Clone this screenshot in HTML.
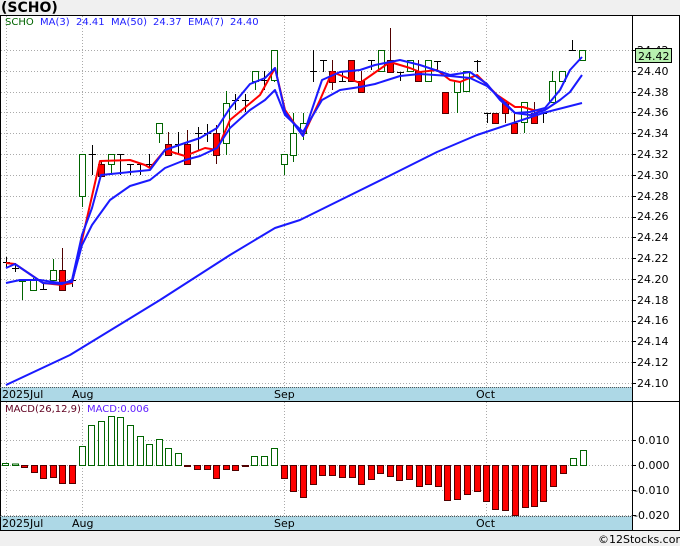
<!DOCTYPE html>
<html><head><meta charset="utf-8"><style>
body{margin:0;background:#f0f0f0;width:680px;height:546px;overflow:hidden;font-family:"Liberation Sans",sans-serif}
svg{position:absolute;left:0;top:0}
</style></head><body>
<svg id="s" width="680" height="546" viewBox="0 0 680 546" font-family="DejaVu Sans, Liberation Sans, sans-serif">
<text x="1" y="12" font-size="14" font-weight="bold" fill="#000">(SCHO)</text>
<rect x="0.5" y="15.5" width="679" height="515" fill="#fff" stroke="#000"/>
<g id="grid" stroke="#aaa" stroke-dasharray="1,2" stroke-width="1"></g>
<rect x="1" y="387" width="631" height="14" fill="#add8e6"/>
<line x1="0" y1="387.5" x2="632" y2="387.5" stroke="#555" stroke-dasharray="1,1"/>
<line x1="0" y1="401.5" x2="680" y2="401.5" stroke="#000"/>
<rect x="1" y="516" width="631" height="14" fill="#add8e6"/>
<line x1="0" y1="516.5" x2="632" y2="516.5" stroke="#555" stroke-dasharray="1,1"/>
<line x1="632.5" y1="15" x2="632.5" y2="530" stroke="#000"/>
<g font-size="11" fill="#000">
<text x="2" y="398">2025Jul</text><text x="72" y="398">Aug</text><text x="274" y="398">Sep</text><text x="476" y="398">Oct</text>
<text x="2" y="527">2025Jul</text><text x="72" y="527">Aug</text><text x="274" y="527">Sep</text><text x="476" y="527">Oct</text>
</g>
<g id="data"></g>
<g font-size="10">
<text x="5" y="25" fill="#006400">SCHO</text>
<text x="40" y="25" fill="#2020ff">MA(3)</text><text x="76" y="25" fill="#2020ff">24.41</text>
<text x="111" y="25" fill="#2020ff">MA(50)</text><text x="153" y="25" fill="#2020ff">24.37</text>
<text x="188" y="25" fill="#2020ff">EMA(7)</text><text x="230" y="25" fill="#2020ff">24.40</text>
<text x="5" y="412" fill="#600020">MACD(26,12,9)</text><text x="87" y="412" fill="#6020ff">MACD:0.006</text>
</g>
<g font-size="11" fill="#000" id="ax">
<text x="637" y="54">24.42</text><text x="637" y="75">24.40</text><text x="637" y="96">24.38</text><text x="637" y="116">24.36</text>
<text x="637" y="137">24.34</text><text x="637" y="158">24.32</text><text x="637" y="179">24.30</text><text x="637" y="200">24.28</text>
<text x="637" y="220">24.26</text><text x="637" y="241">24.24</text><text x="637" y="262">24.22</text><text x="637" y="283">24.20</text>
<text x="637" y="304">24.18</text><text x="637" y="324">24.16</text><text x="637" y="345">24.14</text><text x="637" y="366">24.12</text>
<text x="637" y="387">24.10</text>
<text x="638" y="444">0.010</text><text x="638" y="469">0.000</text><text x="634" y="494">-0.010</text><text x="634" y="519">-0.020</text>
</g>
<rect x="635.5" y="48.5" width="36" height="14" fill="#b8f0b0" stroke="#000"/>
<text x="638" y="60" font-size="11" fill="#000">24.42</text>
<text x="598" y="543" font-size="11" fill="#000">©12Stocks.com</text>
</svg>
<script>
var NS="http://www.w3.org/2000/svg";
function el(p,t,a){var e=document.createElementNS(NS,t);for(var k in a)e.setAttribute(k,a[k]);p.appendChild(e);return e;}
var g=document.getElementById('grid'),d=document.getElementById('data');
function Y(v){return 383-(v-24.10)*1040.6;}
for(var v=24.10;v<24.43;v+=0.02){var y=Math.round(Y(v))+.5;el(g,'line',{x1:1,x2:632,y1:y,y2:y});el(g,'line',{x1:632,x2:636,y1:y,y2:y,stroke:'#000','stroke-dasharray':'none'});}
[440,465,490,515].forEach(function(y){el(g,'line',{x1:1,x2:632,y1:y+.5,y2:y+.5});el(g,'line',{x1:632,x2:636,y1:y+.5,y2:y+.5,stroke:'#000','stroke-dasharray':'none'});});
[6,82,284,486].forEach(function(x){el(g,'line',{x1:x+.5,x2:x+.5,y1:16,y2:387});el(g,'line',{x1:x+.5,x2:x+.5,y1:402,y2:516});});
var C=[[6,'b',262,262,257,267],[15,'b',268,268,263,272],[22,'g',280,281,280,300],[33,'g',280,290,278,290],[43,'b',289,289,283,289],[53,'g',270,280,259,280],[62,'r',270,290,248,290],[72,'b',280,280,275,287],
[82,'g',154,196,154,207],[92,'b',154,154,145,175],[101,'r',164,176,160,176],[111,'g',154,164,154,175],[120,'b',154,154,154,175],[130,'b',164,164,164,175],[140,'b',164,164,164,175],[149,'b',164,164,154,168],
[159,'g',123,133,123,143],[168,'r',144,155,132,155],[178,'b',144,144,132,155],[187,'r',144,164,130,164],[198,'b',133,133,127,150],[207,'b',133,133,124,142],[216,'r',133,155,125,164],[226,'g',103,143,91,155],
[235,'b',100,100,94,110],[245,'b',100,100,94,112],[255,'g',71,81,71,90],[264,'b',80,80,71,90],[274,'g',50,80,50,82],
[284,'g',154,164,154,175],[293,'g',133,155,113,162],[303,'g',123,133,113,140],[313,'b',71,71,50,82],[323,'b',60,60,60,72],[332,'r',71,82,60,90],[342,'b',81,81,72,81],[351,'r',60,81,60,81],[361,'r',81,92,71,92],
[371,'b',60,60,60,70],[381,'g',50,71,50,71],[390,'r',60,72,28,72],[400,'b',72,72,72,81],[410,'g',60,71,60,71],[418,'r',71,81,60,81],[428,'g',60,81,60,81],[437,'b',61,61,61,72],[445,'r',92,113,92,113],
[457,'g',81,92,81,113],[466,'g',71,91,71,91],[477,'b',61,61,60,72],[487,'b',113,113,113,123],[495,'r',113,123,113,123],[505,'r',102,113,102,123],[514,'r',123,133,113,133],[524,'g',102,122,102,133],
[534,'r',113,123,102,123],[543,'b',113,113,113,123],[552,'g',81,102,71,102],[562,'g',71,81,71,81],[572,'b',50,50,40,51],[582,'g',50,60,50,60]];
C.forEach(function(c){var x=c[0],col=c[1]=='g'?'#006400':c[1]=='r'?'#500000':'#000';
el(d,'line',{x1:x+.5,x2:x+.5,y1:c[4],y2:c[5],stroke:col});
if(c[1]=='b'){el(d,'line',{x1:x-3,x2:x+4,y1:c[2]+.5,y2:c[2]+.5,stroke:'#000'});}
else el(d,'rect',{x:x-2.5,y:c[2]+.5,width:6,height:Math.max(c[3]-c[2],1),fill:c[1]=='g'?'#fff':'#f00',stroke:col});});
function pl(pts,col){el(d,'polyline',{points:pts,fill:'none',stroke:col,'stroke-width':2,'stroke-linejoin':'round'});}
pl("6,263 15,264 43,283 62,285 72,283 82,240 100,161 130,160 145,165 150,168 165,150 185,156 205,148 217,150 230,120 260,95 275,68 285,110 303,136 320,100 332,72 360,83 390,62 410,68 420,72 437,70 450,80 460,82 477,75 497,95 515,107 523,107 533,110 543,111",'#f00');
pl("6,385 70,355 160,300 230,255 275,228 300,220 383,179 437,152 477,135 543,113 582,103",'#1a1aff');
pl("6,283 20,280 40,280 60,283 72,282 82,245 92,225 110,200 130,186 150,180 165,168 185,160 200,156 217,148 230,128 250,110 265,100 275,90 285,115 303,132 322,100 340,90 360,87 375,84 400,76 420,74 450,76 470,78 487,86 500,98 515,113 530,115 545,110 560,100 570,92 582,75",'#1a1aff');
pl("6,268 15,264 43,283 62,284 72,280 82,235 92,208 101,175 130,172 150,170 165,150 185,143 200,138 217,128 230,108 250,84 265,78 275,68 285,112 303,136 322,80 340,72 360,70 375,65 400,60 420,65 450,75 470,72 487,84 500,100 515,113 530,112 545,108 560,90 570,70 582,57",'#1a1aff');
var M=[[5,2],[15,1.5],[24,-2],[34,-7],[43,-13],[53,-12],[62,-18],[72,-18],[82,19],[91,40],[101,44],[111,49],[120,48],[130,40],[140,29],[149,21],[159,26],[168,17],[178,12],[187,-1],[197,-4],[207,-4],[216,-13],[226,-4],[235,-5],[245,-1],[254,9],[264,9],[274,17],[284,-13],[293,-26],[303,-32],[313,-19],[322,-10],[332,-10],[342,-12],[352,-12],[361,-19],[371,-14],[380,-8],[390,-11],[399,-15],[409,-14],[419,-21],[428,-19],[438,-21],[447,-35],[457,-34],[467,-29],[477,-26],[486,-36],[495,-44],[505,-45],[515,-50],[525,-42],[534,-41],[543,-36],[553,-21],[563,-8],[573,7],[583,15]];
M.forEach(function(m){var x=m[0],h=m[1];if(h>0)el(d,'rect',{x:x-2.5,y:465.5-h,width:6,height:h,fill:'#fff',stroke:'#006400'});else el(d,'rect',{x:x-2.5,y:465.5,width:6,height:-h,fill:Math.abs(h)<2?'#800000':'#f00',stroke:'#500000'});});
</script>
</body></html>
